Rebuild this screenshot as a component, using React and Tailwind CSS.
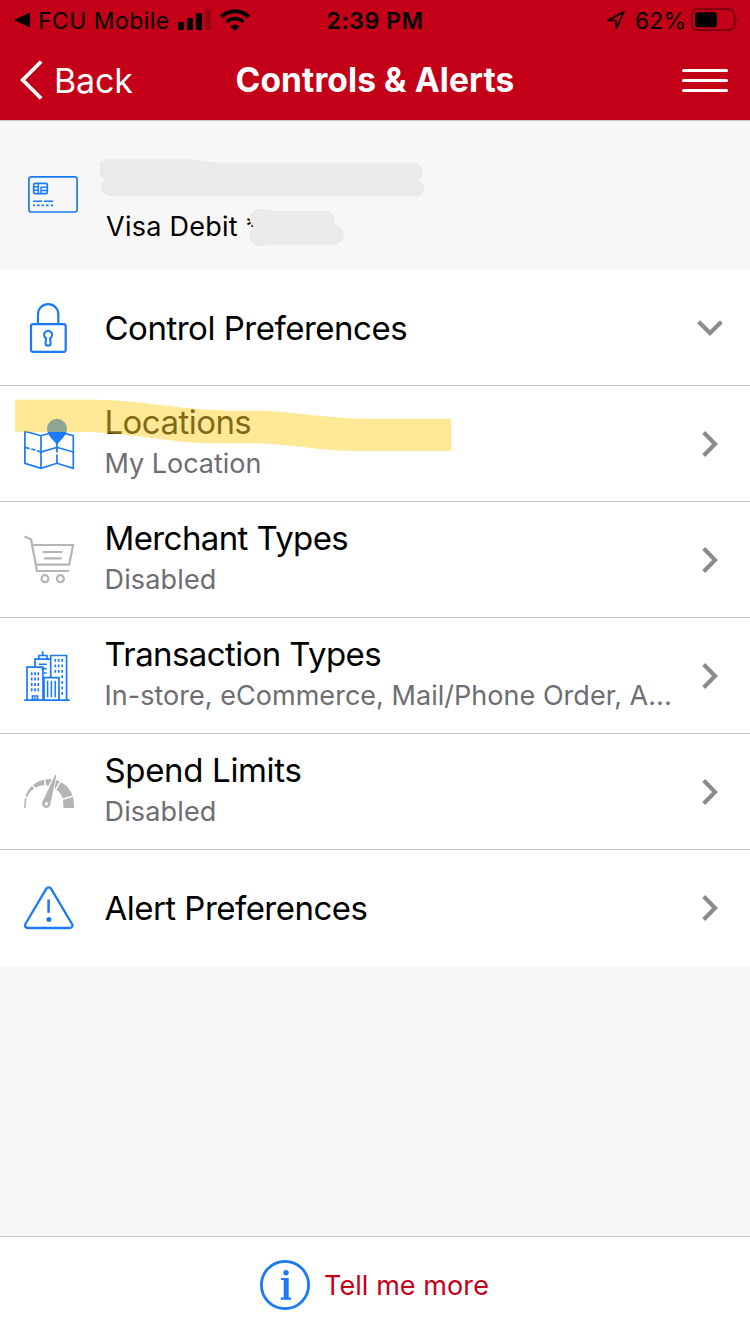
const BLUE = '#1a7af8'
const GRAY = '#b5b5b7'

function LockIcon() {
  return (
    <svg width="52" height="60" viewBox="0 0 52 60" fill="none" stroke={BLUE} strokeWidth="2.2">
      <rect x="7" y="26.2" width="34.7" height="27.6" rx="2" />
      <path d="M14 26V16.2a10.1 10.1 0 0 1 20.3 0V26" />
      <path strokeWidth="2.1" d="M22 40.2a4 4 0 1 1 4.2 0l.4 5a2.5 2.5 0 0 1-5 0z" />
    </svg>
  )
}

function MapIcon() {
  return (
    <svg width="52" height="60" viewBox="0 0 52 60" fill="none" stroke={BLUE} strokeWidth="1.7">
      <path d="M.9 17.3 17 21.7l16-4.4 16.3 4.4v32.6L33 49.3l-16 5-16.1-5zM17 21.7v32.6" />
      <path d="M.7 33.3l5 1.3M7.3 35l4 1.1M13 36.7l4 1.3 16-4.7L49.3 38M33 29v9.5M33 40.5v8.8" />
      <path fill={BLUE} stroke="none" d="M33 31c-2-4-10-9-10-16.3a10 10 0 0 1 20 0C43 22 35 27 33 31z" />
    </svg>
  )
}

function CartIcon() {
  return (
    <svg width="52" height="60" viewBox="0 0 52 60" fill="none" stroke={GRAY} strokeWidth="2.2">
      <path d="M.5 6.6 7 9.3l6 31.7h32" />
      <path strokeLinejoin="round" d="M8.3 15h40.8l-3.9 19.7H11.7" />
      <path strokeLinecap="round" d="M19.5 22H37.7M21 28.3h16" />
      <circle cx="21" cy="48.7" r="3.5" />
      <circle cx="36.4" cy="48.7" r="3.5" />
    </svg>
  )
}

function BuildingsIcon() {
  return (
    <svg width="52" height="60" viewBox="0 0 52 60" fill="none" stroke={BLUE} strokeWidth="1.7">
      <path d="M.2 54.2h45.5" />
      <path d="M3 54V21.2h16V54M11 21.2v-8h15.7M14.8 13V9.5h8.2V13M18.7 5.3v4M26.7 31.5v-22h15.9V54" />
      <path d="M20 54V31.7h15V54" />
      <path d="M23.6 34.7v16.6M27.4 34.7v16.6M31.2 34.7v16.6M15 18.2h7.7M17.3 22.7h5.4M20 27h2.7" strokeWidth="1.5" />
      <path d="M8.5 54v-4h5v4M11 51.5V54" />
      <path d="M7.7 26.2v3M11 26.2v3M14.3 26.2v3M7.7 31.5v3M11 31.5v3M14.3 31.5v3M7.7 36.9v3M11 36.9v3M14.3 36.9v3M7.7 42.2v3M11 42.2v3M14.3 42.2v3" />
      <path d="M31.3 13v2.8M34.7 13v2.8M38.2 13v2.8M31.3 18.4v2.8M34.7 18.4v2.8M38.2 18.4v2.8M31.3 23.9v2.8M34.7 23.9v2.8M38.2 23.9v2.8M38.2 29.3v2.8M38.2 34.9v2.8M38.2 40.5v2.8M38.2 46v2.8" />
    </svg>
  )
}

function GaugeIcon() {
  return (
    <svg width="52" height="60" viewBox="0 0 52 60" fill="none">
      <path fill={GRAY} d="M.2 46v-4a24.9 25 0 0 1 49.8 0v4H39.4v-4a18.8 18.8 0 0 0-37.6 0v4z" />
      <path stroke="#fff" strokeWidth="1.5" d="M0 34.9l6 1.6M7.3 22.2l5.5 6M20.3 15.7l1.2 8.5M37.5 17.9l-5.500 9.300M50 34.100 37 37.500" />
      <path stroke="#fff" strokeWidth="3" d="M31.400 13.200 26.200 42.200a4.200 4.200 0 1 1-7.900-2z" />
      <path fill={GRAY} d="M31.200 12.800 32.400 13.200 26.400 42.200a4.200 4.200 0 1 1-8.100-2z" />
      <circle cx="22.4" cy="41.7" r="1.7" fill="#fff" />
    </svg>
  )
}

function WarningIcon() {
  return (
    <svg width="52" height="60" viewBox="0 0 52 60" fill="none" stroke={BLUE} strokeWidth="2.3">
      <path d="M22.2 10.9a2.9 2.9 0 0 1 5 0L48 46c1.2 2-.2 4-2.3 4H3.9c-2.3 0-3.7-2-2.5-4z" />
      <path d="M24.6 21.4v13.4" strokeWidth="2.5" />
      <circle cx="24.9" cy="41.5" r="2.5" fill={BLUE} stroke="none" />
    </svg>
  )
}

function CardIcon() {
  return (
    <svg className="shrink-0" width="50" height="37" viewBox="0 0 50 37" fill="none" stroke={BLUE} strokeWidth="1.7">
      <rect x=".9" y=".9" width="48.2" height="35.1" rx="2.2" />
      <rect x="5.7" y="7.3" width="13.6" height="10.4" rx="1.5" />
      <path d="M10.3 7.3v10.4M5.7 10.8h4.6M5.7 14.2h4.6M13 17.5v-6.2h6.3M13 14.5h6.3" strokeWidth="1.4" />
      <path d="M5 25.2h9.3M16 25.2h9" strokeWidth="1.5" />
      <path d="M5 29.4h2M9 29.4h2.6M13.5 29.4h2.6M18 29.4h2.6M22.8 29.4H25" strokeWidth="1.7" />
    </svg>
  )
}

function Chevron({ down }) {
  return (
    <svg className="absolute top-11 right-6" width="32" height="28" viewBox="0 0 32 28" fill="none" stroke="#8c8c8e" strokeWidth="4.2">
      {down ? <path d="M4.6 7.8 16 19 27.4 7.8" /> : <path d="M9.7 2.6 21 14 9.7 25.4" />}
    </svg>
  )
}

const rows = [
  { icon: LockIcon, title: 'Control Preferences', track: 'tracking-[-0.49px]', down: true },
  { icon: MapIcon, title: 'Locations', track: 'tracking-[-0.55px]', sub: 'My Location', subTrack: 'tracking-[-0.02px]', marked: true },
  { icon: CartIcon, title: 'Merchant Types', track: 'tracking-[-0.6px]', sub: 'Disabled', subTrack: 'tracking-[0.15px]' },
  { icon: BuildingsIcon, title: 'Transaction Types', track: 'tracking-[-0.6px]', sub: 'In-store, eCommerce, Mail/Phone Order, A...', subTrack: 'tracking-[0.03px]' },
  { icon: GaugeIcon, title: 'Spend Limits', track: 'tracking-[-0.34px]', sub: 'Disabled', subTrack: 'tracking-[0.15px]' },
  { icon: WarningIcon, title: 'Alert Preferences', track: 'tracking-[-0.53px]' },
]

function Row({ row, last }) {
  const Icon = row.icon
  return (
    <div className={`relative flex h-[116px] bg-white pl-6 pt-7 ${last ? '' : 'border-b border-[#c8c7cc]'}`}>
      <Icon />
      <div className={`ml-[28.5px] whitespace-nowrap ${row.sub ? '-mt-3' : 'mt-[10px]'}`}>
        <div className={`text-[33px] leading-10 text-black ${row.track}`}>{row.title}</div>
        {row.sub && <div className={`mt-1 text-[27px] leading-9 text-[#6d6d72] ${row.subTrack}`}>{row.sub}</div>}
      </div>
      <Chevron down={row.down} />
      {row.marked && (
        <svg className="absolute left-0 top-0" width="460" height="70" viewBox="0 0 460 70">
          <path
            fill="rgb(255,210,45)"
            fillOpacity=".5"
            d="M15 13.8H97C130 14 165 20.5 200 23.3C225 25.5 250 23.5 275 25.5C310 28 335 32.7 365 32.7H451V65H355C320 65 290 57.8 255 57.3C225 56.8 210 58.5 180 55.5C150 52 125 47.8 87 46H15z"
          />
        </svg>
      )}
    </div>
  )
}

function StatusBar() {
  return (
    <div className="relative flex h-10 items-center text-[23px] text-black">
      <svg className="ml-[14px]" width="16" height="16" viewBox="0 0 16 16">
        <path d="M0 8 16 .5v15z" />
      </svg>
      <span className="ml-2 mt-[2px] w-[132px] whitespace-nowrap tracking-[0.45px]">FCU Mobile</span>
      <svg className="ml-2" width="34" height="22" viewBox="0 0 34 22">
        <rect x="0" y="13" width="6" height="8" rx="1.3" />
        <rect x="9" y="9" width="6" height="12" rx="1.3" />
        <rect x="18" y="4" width="6" height="17" rx="1.3" />
        <rect x="27" y="0" width="6" height="21" rx="1.3" opacity=".22" />
      </svg>
      <svg className="ml-2" width="30" height="22" viewBox="0 0 30 22" fill="none" stroke="#000" strokeWidth="4">
        <path d="M1.4 7.9a19.5 19.5 0 0 1 27.2 0" />
        <path d="M6.4 13.1a12.3 12.3 0 0 1 17.2 0" strokeWidth="3.5" />
        <path d="M15 22l-4.6-4.6a6.5 6.5 0 0 1 9.2 0z" fill="#000" stroke="none" />
      </svg>
      <span className="absolute inset-x-0 mt-[2px] text-center font-semibold tracking-[0.6px]">2:39 PM</span>
      <svg className="ml-auto" width="18" height="18" viewBox="0 0 18 18" fill="none" stroke="#000" strokeWidth="1.7" strokeLinejoin="round">
        <path d="M1 9.3 16.8 1 9.6 16.8 8.6 9.5z" />
      </svg>
      <span className="ml-[10px] mt-[2px] w-[53px] whitespace-nowrap tracking-[0.1px]">62%</span>
      <svg className="ml-[3px] mr-[10px]" width="49" height="24" viewBox="0 0 49 24">
        <rect x="1" y="1.2" width="42.5" height="21" rx="5.5" fill="none" stroke="#000" strokeOpacity=".4" strokeWidth="1.8" />
        <rect x="4" y="4.2" width="22" height="15" rx="3" />
        <path d="M46 8.5q2.4 3.5 0 7z" opacity=".45" />
      </svg>
    </div>
  )
}

function NavBar() {
  return (
    <div className="relative flex h-20 items-center text-white">
      <svg className="ml-5" width="24" height="42" viewBox="0 0 24 42" fill="none" stroke="#fff" strokeWidth="3.8">
        <path d="M21.2 2.5 2.7 21l18.5 18.5" />
      </svg>
      <span className="ml-[10px] text-[34px] tracking-[-0.2px]">Back</span>
      <h1 className="absolute inset-x-0 mt-px text-center text-[33.5px] font-bold tracking-[0.1px]">Controls &amp; Alerts</h1>
      <div className="ml-auto mr-[22px] flex w-[46px] flex-col gap-[7px]">
        <div className="h-[3px] rounded-full bg-white" />
        <div className="h-[3px] rounded-full bg-white" />
        <div className="h-[3px] rounded-full bg-white" />
      </div>
    </div>
  )
}

function CardSummary() {
  return (
    <div className="relative flex h-[149px] bg-[#f7f7f7] pl-7 pt-[55px]">
      <CardIcon />
      <div className="ml-7 mt-[33px] whitespace-nowrap text-[27px] leading-9 text-black">
        <span className="tracking-[0.25px]">Visa Debit</span>
        <span> *</span>
      </div>
      <svg className="absolute left-[100px] top-[37px]" width="326" height="92" viewBox="0 0 326 92" fill="#eaeaea">
        <path d="M9.5 1.5H90C105 2.5 108 4.7 125 4.7H313.5a9.4 9.4 0 0 1 5.3 17.1a8.8 8.8 0 0 1-7 16.2H11a9.3 9.3 0 0 1-5-17.5A9.5 9.5 0 0 1 9.5 1.5z" />
        <path d="M160 51C170 51 172 53 178 53H225a9.5 9.5 0 0 1 9 13.8a9.5 9.5 0 0 1 0 20H176C170 86.8 168 88 160 88a10 10 0 0 1-5.5-18.5A10 10 0 0 1 160 51z" />
      </svg>
    </div>
  )
}

export default function App() {
  return (
    <div className="flex h-[1334px] w-[750px] flex-col overflow-hidden bg-[#f7f7f7] font-['Inter',sans-serif]">
      <header className="border-b border-[#c8c7cc] bg-[#c40018]">
        <StatusBar />
        <NavBar />
      </header>
      <CardSummary />
      <main>
        {rows.map((row, i) => (
          <Row key={row.title} row={row} last={i === rows.length - 1} />
        ))}
      </main>
      <footer className="mt-auto flex h-[98px] items-start border-t border-[#c8c7cc] bg-white pl-[260px] pt-[23px]">
        <svg width="50" height="50" viewBox="0 0 50 50">
          <circle cx="25" cy="25" r="23.6" fill="none" stroke={BLUE} strokeWidth="2.8" />
          <circle cx="26" cy="12.8" r="2.7" fill={BLUE} />
          <path fill={BLUE} d="M21 18h7.7v19.5H31V39.7H20.7V37.5H23.7V20H21z" />
        </svg>
        <span className="ml-[14px] mt-2 whitespace-nowrap text-[27px] leading-9 tracking-[0.08px] text-[#c40018]">Tell me more</span>
      </footer>
    </div>
  )
}
